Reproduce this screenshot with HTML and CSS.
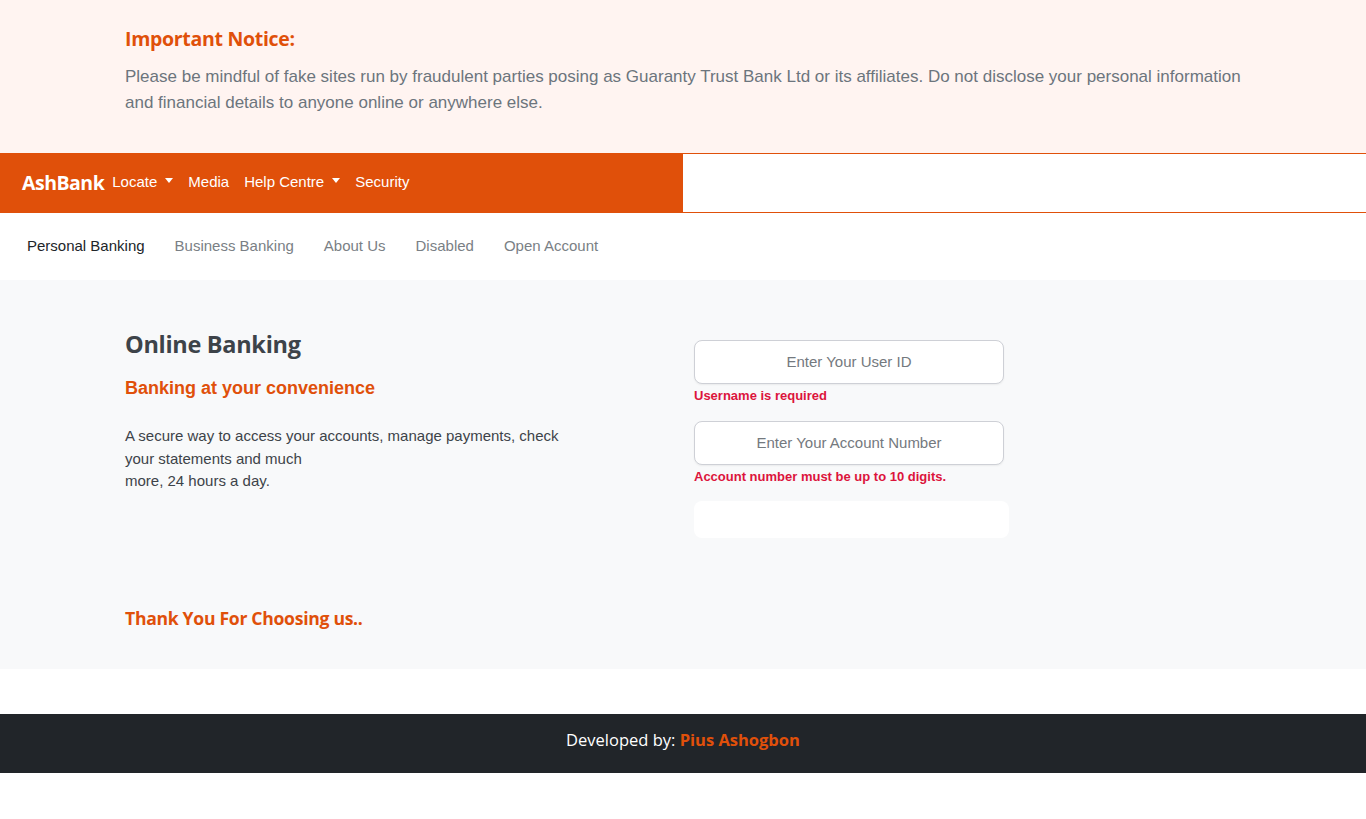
FILE: index.html
```html
<!DOCTYPE html>
<html lang="en">
<head>
<meta charset="utf-8">
<title>AshBank</title>
<link rel="stylesheet" href="styles.css">
</head>
<body>
<section class="notice">
  <div class="container">
    <h4 class="notice-title">Important Notice:</h4>
    <p class="notice-text">Please be mindful of fake sites run by fraudulent parties posing as Guaranty Trust Bank Ltd or its affiliates. Do not disclose your personal information and financial details to anyone online or anywhere else.</p>
  </div>
</section>
<nav class="topbar">
  <div class="topbar-main">
    <span class="brand">AshBank</span>
    <a class="top-link">Locate <span class="caret"></span></a>
    <a class="top-link">Media</a>
    <a class="top-link">Help Centre <span class="caret"></span></a>
    <a class="top-link">Security</a>
  </div>
  <div class="topbar-side"></div>
</nav>
<nav class="subnav">
  <a class="sub-link active">Personal Banking</a>
  <a class="sub-link">Business Banking</a>
  <a class="sub-link">About Us</a>
  <a class="sub-link">Disabled</a>
  <a class="sub-link">Open Account</a>
</nav>
<main class="main">
  <div class="container">
    <div class="row">
      <div class="col">
        <h2 class="title">Online Banking</h2>
        <h5 class="subtitle">Banking at your convenience</h5>
        <p class="desc">A secure way to access your accounts, manage payments, check your statements and much<br>more, 24 hours a day.</p>
      </div>
      <div class="col">
        <form class="login">
          <input class="field" type="text" placeholder="Enter Your User ID">
          <div class="error">Username is required</div>
          <input class="field field-2" type="text" placeholder="Enter Your Account Number">
          <div class="error">Account number must be up to 10 digits.</div>
          <div class="blank-btn"></div>
        </form>
      </div>
    </div>
    <h4 class="thanks">Thank You For Choosing us..</h4>
  </div>
</main>
<footer class="footer">
  <span>Developed by: </span><span class="author">Pius Ashogbon</span>
</footer>
</body>
</html>
```
FILE: styles.css
```css
* { box-sizing: border-box; }
html, body { margin: 0; padding: 0; }
body {
  font-family: "Liberation Sans", Arial, sans-serif;
  background: #fff;
  color: #212529;
}
a { text-decoration: none; cursor: pointer; }
.container {
  width: 1140px;
  margin: 0 auto;
  padding: 0 12px;
}

.notice {
  background: #fff4f1;
  padding: 26px 0 30px;
  border-bottom: 1px solid #e0500a;
  height: 154px;
}
.notice-title {
  margin: 0 0 12px;
  font-family: "Open Sans", sans-serif;
  font-weight: 700;
  font-size: 19.5px;
  line-height: 26px;
  color: #e0500a;
  letter-spacing: -0.3px;
}
.notice-text {
  margin: 0;
  font-size: 17px;
  line-height: 26px;
  color: #6c757d;
}

.topbar {
  display: flex;
  height: 59px;
  border-bottom: 1px solid #e0500a;
}
.topbar-main {
  width: 683px;
  background: #e0500a;
  display: flex;
  align-items: center;
  padding-left: 22px;
  padding-bottom: 3px;
}
.topbar-side { flex: 1; background: #fff; }
.brand {
  color: #fff;
  font-family: "Open Sans", sans-serif;
  font-weight: 700;
  font-size: 19.5px;
  letter-spacing: -0.5px;
  margin-right: 8px;
  margin-top: 2px;
}
.top-link {
  color: #fff;
  font-size: 15px;
  margin-right: 15px;
  display: inline-flex;
  align-items: center;
}
.caret {
  display: inline-block;
  width: 0; height: 0;
  border-left: 4.5px solid transparent;
  border-right: 4.5px solid transparent;
  border-top: 5px solid #fff;
  margin-left: 8px;
  margin-top: -2px;
}

.subnav {
  height: 67px;
  display: flex;
  align-items: center;
  padding-left: 27px;
  padding-bottom: 2px;
  gap: 30px;
}
.sub-link {
  font-size: 15px;
  color: #7a7f85;
}
.sub-link.active { color: #212529; }

.main {
  background: #f8f9fa;
  padding: 47px 0 38px;
}
.row { display: flex; }
.col { width: 50%; }
.col:last-child { padding-left: 12px; }
.title {
  margin: 0;
  font-family: "Open Sans", sans-serif;
  font-weight: 700;
  font-size: 23.5px;
  line-height: 34px;
  color: #3d4349;
  letter-spacing: -0.3px;
}
.subtitle {
  margin: 15px 0 0;
  font-weight: 700;
  font-size: 18px;
  line-height: 24px;
  color: #e0500a;
}
.desc {
  margin: 25px 0 0;
  width: 450px;
  font-size: 15px;
  line-height: 22.5px;
  color: #3d4349;
}
.login {
  display: flex;
  flex-direction: column;
  margin-top: 13px;
  margin-left: -1px;
}
.field {
  width: 310px;
  height: 44px;
  border: 1px solid #ced0d6;
  border-radius: 8px;
  background: #fff;
  box-shadow: 0 1px 2px rgba(0,0,0,0.06);
  font-family: "Liberation Sans", Arial, sans-serif;
  font-size: 15px;
  text-align: center;
  padding: 0 12px 2px;
  outline: none;
}
.field::placeholder { color: #74797e; }
.field-2 { margin-top: 18px; }
.error {
  margin-top: 4px;
  font-size: 13px;
  font-weight: 700;
  color: #dc143c;
  line-height: 15px;
}
.blank-btn {
  margin-top: 17px;
  width: 315px;
  height: 37px;
  background: #fff;
  border-radius: 8px;
}
.thanks {
  margin: 67px 0 0;
  font-family: "Open Sans", sans-serif;
  font-weight: 700;
  font-size: 17.6px;
  line-height: 26px;
  color: #e0500a;
  letter-spacing: -0.3px;
}

.footer {
  margin-top: 45px;
  background: #212529;
  height: 59px;
  display: flex;
  align-items: center;
  justify-content: center;
  padding-bottom: 8px;
  color: #fff;
  font-family: "Open Sans", sans-serif;
  font-size: 16.5px;
  white-space: pre;
}
.author { color: #e0500a; font-weight: 700; }
```
